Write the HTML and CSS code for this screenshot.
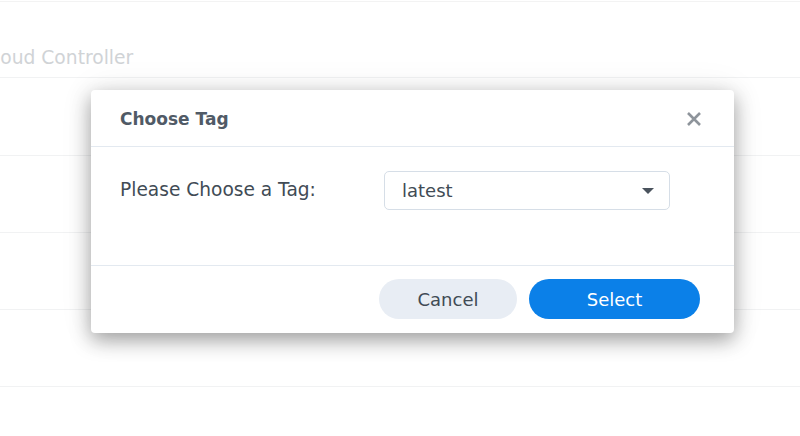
FILE: index.html
```html
<!DOCTYPE html>
<html>
<head>
<meta charset="utf-8">
<link rel="stylesheet" href="styles.css">
</head>
<body>
<div class="page">
  <div class="row row-head"><span class="row-text">Cloud Controller</span></div>
  <div class="row row-second"></div>
  <div class="row"></div>
  <div class="row"></div>
  <div class="row"></div>
</div>
<div class="dialog">
  <div class="dlg-head">
    <span class="dlg-title">Choose Tag</span>
    <svg class="close" width="16" height="16" viewBox="0 0 16 16"><path d="M2 2L14 14M14 2L2 14" stroke="#8e949b" stroke-width="2.6" stroke-linecap="butt"/></svg>
  </div>
  <div class="dlg-body">
    <span class="label">Please Choose a Tag:</span>
    <div class="select">
      <span class="select-val">latest</span>
      <svg class="caret" width="12" height="6" viewBox="0 0 12 6"><path d="M0 0H12L6 6Z" fill="#4a535d"/></svg>
    </div>
  </div>
  <div class="dlg-foot">
    <button class="btn btn-cancel">Cancel</button>
    <button class="btn btn-primary">Select</button>
  </div>
</div>
</body>
</html>
```
FILE: styles.css
```css
html, body {
  margin: 0;
  padding: 0;
  background: #ffffff;
  width: 800px;
  height: 436px;
  overflow: hidden;
  font-family: "DejaVu Sans", Verdana, sans-serif;
}
.page {
  border-top: 1px solid #f3f3f3;
  margin-top: 1px;
}
.row {
  height: 76px;
  border-bottom: 1px solid #f1f2f3;
  box-sizing: content-box;
}
.row-head {
  height: 75px;
  display: flex;
  align-items: flex-end;
  overflow: hidden;
}
.row-second {
  height: 77px;
}
.row-text {
  font-size: 18.7px;
  color: #d0d3d6;
  margin-left: -18px;
  line-height: 22px;
  padding-bottom: 8px;
  white-space: nowrap;
}
.dialog {
  position: absolute;
  left: 91px;
  top: 90px;
  width: 643px;
  height: 243px;
  background: #fff;
  border-radius: 4px;
  box-shadow: 0 7px 20px rgba(0, 0, 0, 0.36), 0 0 36px rgba(0, 0, 0, 0.07);
  display: flex;
  flex-direction: column;
}
.dlg-head {
  height: 57px;
  border-bottom: 1px solid #e3e9f0;
  display: flex;
  align-items: center;
  justify-content: space-between;
  padding: 0 32px 0 29px;
  box-sizing: border-box;
  flex: none;
}
.dlg-title {
  font-weight: bold;
  font-size: 17px;
  color: #505a66;
  padding-top: 1px;
}
.close {
  display: block;
  margin-top: 1px;
}
.dlg-body {
  height: 119px;
  border-bottom: 1px solid #e3e9f0;
  box-sizing: border-box;
  padding: 24px 0 0 29px;
  display: flex;
  align-items: flex-start;
  flex: none;
}
.label {
  font-size: 18.6px;
  color: #414b55;
  width: 264px;
  line-height: 38px;
  white-space: nowrap;
}
.select {
  width: 286px;
  height: 39px;
  box-sizing: border-box;
  border: 1px solid #d6dee7;
  border-radius: 5px;
  display: flex;
  align-items: center;
  justify-content: space-between;
  padding: 0 15px 0 17px;
}
.select-val {
  font-size: 18px;
  color: #414b55;
}
.caret {
  display: block;
}
.dlg-foot {
  flex: 1;
  display: flex;
  justify-content: flex-end;
  align-items: flex-start;
  padding: 13px 34px 0 0;
  gap: 12px;
}
.btn {
  height: 40px;
  border: none;
  border-radius: 20px;
  font-family: "DejaVu Sans", Verdana, sans-serif;
  font-size: 18px;
  padding: 0;
}
.btn-cancel {
  width: 138px;
  background: #e8edf4;
  color: #414b55;
}
.btn-primary {
  width: 171px;
  background: #0b80e8;
  color: #ffffff;
}
```
